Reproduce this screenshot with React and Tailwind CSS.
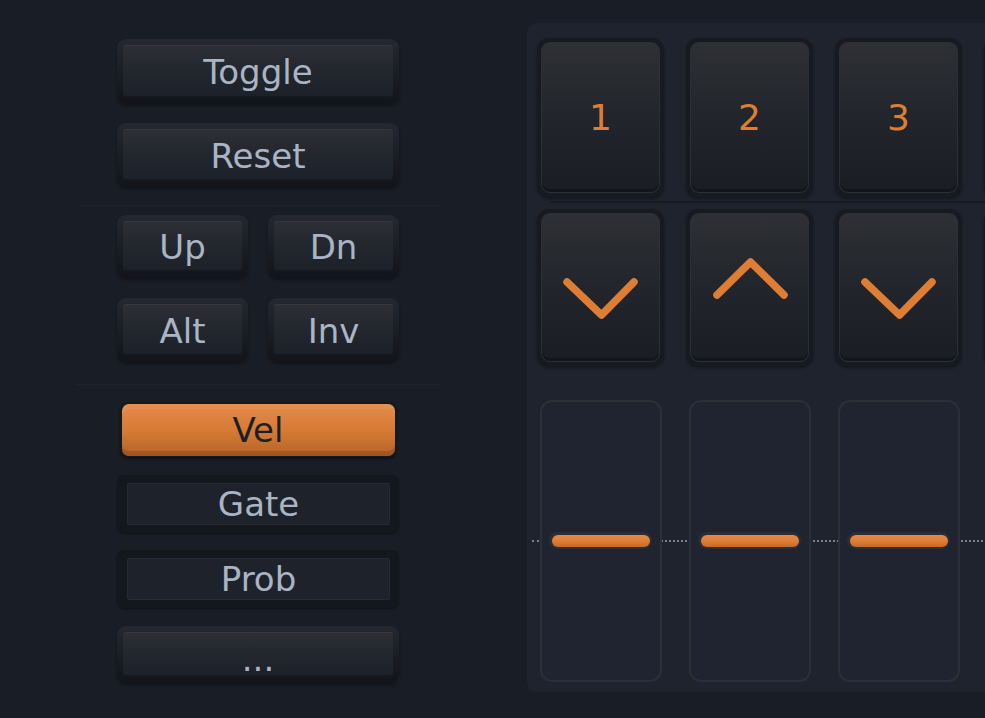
import React from "react";

const FONT = "font-['DejaVu_Sans','Liberation_Sans',sans-serif]";

function BtnA({ children, className = "", h = "h-[65px]", textClass = "" }) {
  return (
    <div
      className={`${h} rounded-[9px] bg-linear-to-b from-[#242831] to-[#121419] p-[6px] shadow-[0_2px_3px_rgba(0,0,0,0.35)] ${className}`}
    >
      <div
        className={`h-full rounded-[3px] bg-linear-to-b from-[#2d2f34] via-[#22262d] to-[#1c2029] border-t border-[#36383d] shadow-[inset_0_-2px_0_rgba(0,0,0,0.25)] flex items-center justify-center text-[34px] leading-none text-[#a9b4c4] ${textClass}`}
      >
        {children}
      </div>
    </div>
  );
}

function BtnB({ children }) {
  return (
    <div className="h-[58px] rounded-[8px] bg-[#14171c] py-[8px] pl-[10px] pr-[9px] shadow-[0_1px_2px_rgba(0,0,0,0.4)]">
      <div className="h-full rounded-[2px] bg-[#1e222a] border border-[#262a31] flex items-center justify-center text-[34px] leading-none text-[#a9b4c4]">
        {children}
      </div>
    </div>
  );
}

function StepBtn({ children, h }) {
  return (
    <div
      className={`w-[127px] ${h} shrink-0 rounded-[12px] bg-[#171a20] p-[4px] shadow-[0_2px_3px_rgba(0,0,0,0.35)]`}
    >
      <div className="relative h-full rounded-[9px] border border-[#2c2f35] bg-linear-to-b from-[#2e3034] via-[#22252b] to-[#1a1d24] shadow-[inset_0_-3px_0_rgba(0,0,0,0.25)] flex items-center justify-center">
        {children}
      </div>
    </div>
  );
}

function Chevron({ up }) {
  return (
    <svg width="80" height="80" viewBox="0 0 80 80" className="block">
      <path
        d={up ? "M7 47 L40.5 14 L74 47" : "M6 34 L40.5 67 L73 34"}
        fill="none"
        stroke="#de7e34"
        strokeWidth="7.5"
        strokeLinecap="round"
        strokeLinejoin="round"
      />
    </svg>
  );
}

function Slider() {
  return (
    <div className="w-[127px] shrink-0">
      <div className="relative z-10 ml-[3px] w-[122px] h-[282px] rounded-[12px] border-2 border-[#2b2f37] bg-[#1f2430] flex flex-col">
        <div className="mt-[130px] ml-[7px] mr-[8px] h-[17px] rounded-full bg-[#2a2e36] p-[2.5px]">
          <div className="h-full rounded-full bg-linear-to-b from-[#e8894a] via-[#de7e36] to-[#c46a2a]" />
        </div>
      </div>
    </div>
  );
}

export default function App() {
  const digits = ["1", "2", "3", ""];
  const chevs = [false, true, false, true];
  return (
    <div
      className={`${FONT} w-[985px] h-[718px] bg-[#191d25] flex overflow-hidden`}
    >
      {/* Left column */}
      <div className="ml-[117px] w-[282px] shrink-0 pt-[39px] flex flex-col">
        <BtnA>Toggle</BtnA>
        <BtnA className="mt-[19px]" h="h-[64px]">Reset</BtnA>
        <div className="mt-[18px] -ml-[37px] w-[360px] h-px bg-[#1f232b]" />
        <div className="mt-[9px] flex gap-[20px]">
          <BtnA className="flex-1" h="h-[63px]">Up</BtnA>
          <BtnA className="flex-1" h="h-[63px]">Dn</BtnA>
        </div>
        <div className="mt-[20px] flex gap-[20px]">
          <BtnA className="flex-1" h="h-[64px]">Alt</BtnA>
          <BtnA className="flex-1" h="h-[64px]">Inv</BtnA>
        </div>
        <div className="mt-[22px] -ml-[42px] w-[365px] h-px bg-[#1f232b]" />
        <div className="mt-[17px] mx-[3px] h-[55px] rounded-[8px] bg-[#16181c] p-[1.5px] shadow-[0_2px_3px_rgba(0,0,0,0.45)]">
          <div className="h-full rounded-[7px] bg-linear-to-b from-[#e38c4d] via-[#d77b34] to-[#b4632a] shadow-[inset_0_-5px_0_rgba(120,60,20,0.35),inset_0_5px_0_rgba(240,160,100,0.25)] flex items-center justify-center text-[34px] leading-none text-[#1b1f27]">
            Vel
          </div>
        </div>
        <div className="mt-[18px]">
          <BtnB>Gate</BtnB>
        </div>
        <div className="mt-[17px]">
          <BtnB>Prob</BtnB>
        </div>
        <BtnA className="mt-[18px]" h="h-[57px]" textClass="pt-[8px]">
          ...
        </BtnA>
      </div>

      {/* Right panel */}
      <div className="ml-[128px] mt-[23px] h-[669px] w-[560px] shrink-0 rounded-[10px] bg-[#1e232d] pl-[10px] pt-[15px] flex flex-col">
        <div className="flex gap-[22px]">
          {digits.map((d, i) => (
            <StepBtn key={i} h="h-[159px]">
              <span className="text-[36px] leading-none text-[#de7e34]">{d}</span>
            </StepBtn>
          ))}
        </div>
        <div className="mt-[4px] ml-[13px] h-[2px] bg-[#161a21]" />
        <div className="mt-[6px] flex gap-[22px]">
          {chevs.map((u, i) => (
            <StepBtn key={i} h="h-[157px]">
              <Chevron up={u} />
            </StepBtn>
          ))}
        </div>
        <div className="relative mt-[34px] flex gap-[22px]">
          <div className="absolute left-[-5px] right-0 top-[140px] border-t-2 border-dotted border-[#7a808a]" />
          <Slider />
          <Slider />
          <Slider />
          <Slider />
        </div>
      </div>
    </div>
  );
}
